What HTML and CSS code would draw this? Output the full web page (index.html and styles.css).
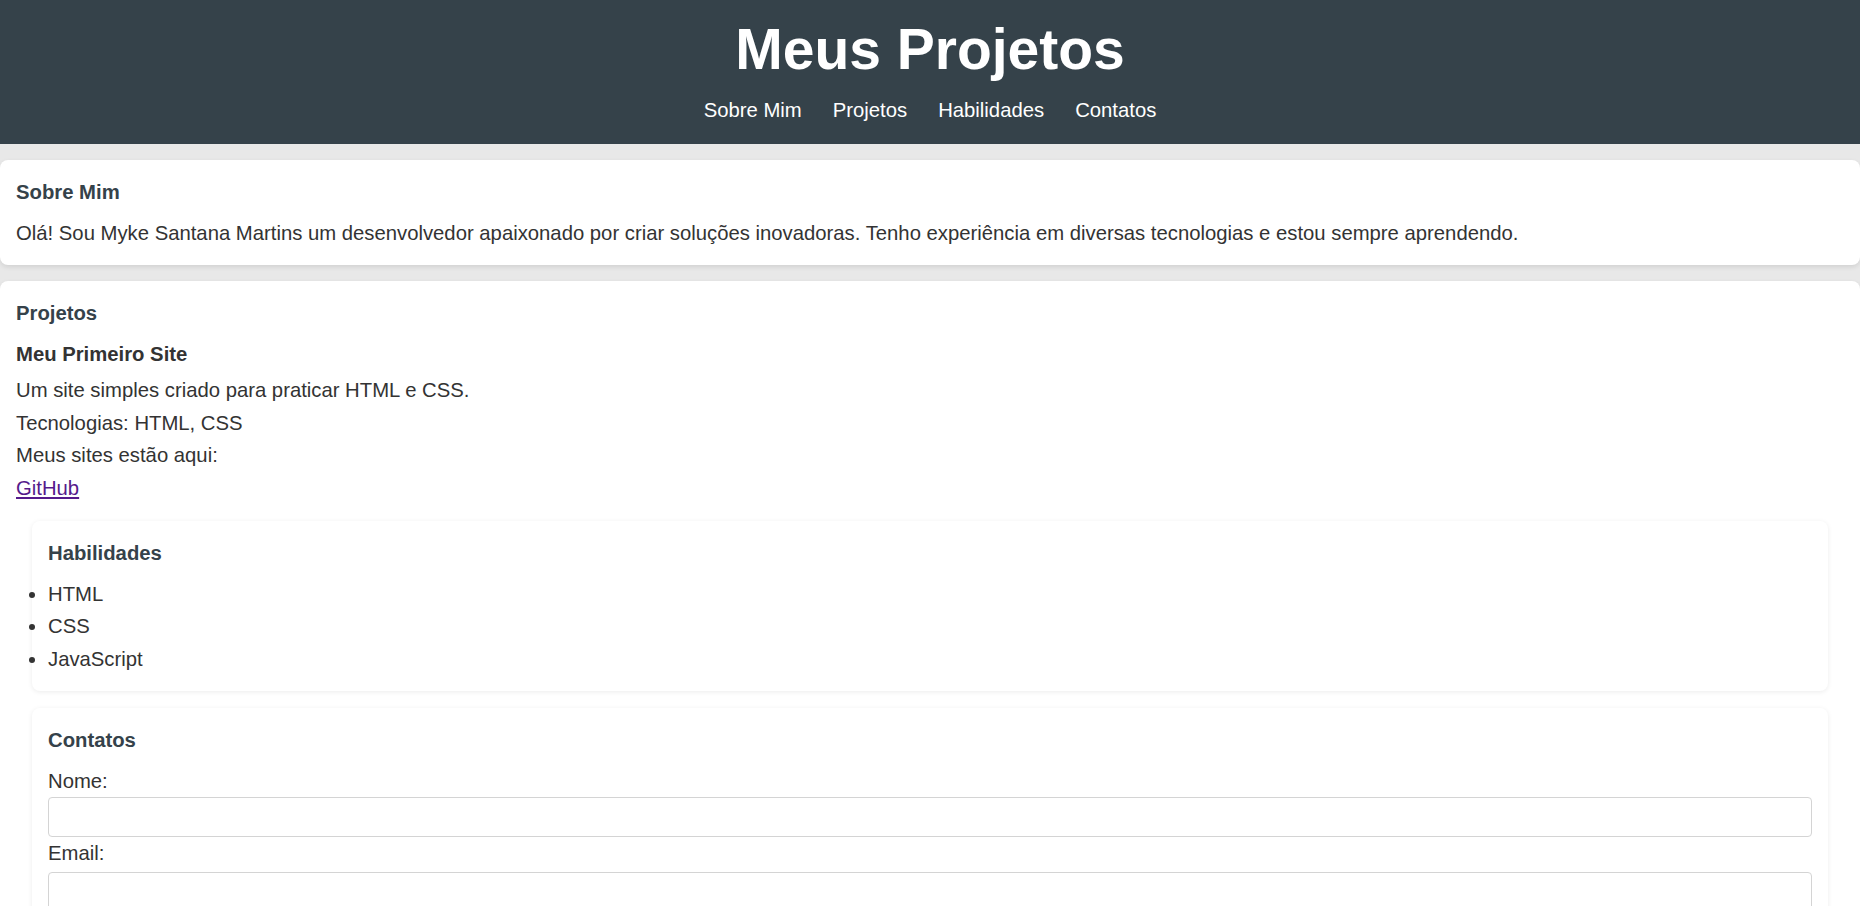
FILE: index.html
```html
<!DOCTYPE html>
<html lang="pt-BR">
<head>
<meta charset="utf-8">
<title>Meus Projetos</title>
<link rel="stylesheet" href="styles.css">
</head>
<body>
<header class="site-header">
  <h1 class="site-title">Meus Projetos</h1>
  <nav class="site-nav">
    <a class="nav-link" href="#sobre">Sobre Mim</a>
    <a class="nav-link" href="#projetos">Projetos</a>
    <a class="nav-link" href="#habilidades">Habilidades</a>
    <a class="nav-link" href="#contatos">Contatos</a>
  </nav>
</header>
<main class="content">
  <section class="card" id="sobre">
    <h2 class="card-title">Sobre Mim</h2>
    <p class="text">Olá! Sou Myke Santana Martins um desenvolvedor apaixonado por criar soluções inovadoras. Tenho experiência em diversas tecnologias e estou sempre aprendendo.</p>
  </section>
  <section class="card" id="projetos">
    <h2 class="card-title">Projetos</h2>
    <div class="project">
      <h3 class="project-title">Meu Primeiro Site</h3>
      <p class="text">Um site simples criado para praticar HTML e CSS.</p>
      <p class="text">Tecnologias: HTML, CSS</p>
      <p class="text">Meus sites estão aqui:<br><a class="link" href="#github">GitHub</a></p>
    </div>
    <section class="card card-nested" id="habilidades">
      <h2 class="card-title">Habilidades</h2>
      <ul class="skills">
        <li>HTML</li>
        <li>CSS</li>
        <li>JavaScript</li>
      </ul>
    </section>
    <section class="card card-nested" id="contatos">
      <h2 class="card-title">Contatos</h2>
      <form class="form">
        <label class="label" for="nome">Nome:</label>
        <input class="field" type="text" id="nome">
        <label class="label" for="email">Email:</label>
        <input class="field field-second" type="email" id="email">
        <label class="label" for="mensagem">Mensagem:</label>
        <textarea class="field field-area" id="mensagem"></textarea>
        <button class="button" type="submit">Enviar</button>
      </form>
    </section>
  </section>
</main>
</body>
</html>
```
FILE: styles.css
```css
* {
  box-sizing: border-box;
}

html, body {
  margin: 0;
  padding: 0;
}

body {
  font-family: "Liberation Sans", Arial, sans-serif;
  font-size: 20.3px;
  line-height: 32.5px;
  color: #333333;
  background: #e8e8e8;
}

.site-header {
  background: #35424a;
  color: #ffffff;
  text-align: center;
  padding: 16px 0 17.5px;
}

.site-title {
  margin: 0 0 12px;
  font-size: 57px;
  line-height: 66px;
  font-weight: bold;
}

.site-nav {
  display: flex;
  justify-content: center;
  gap: 31px;
}

.nav-link {
  color: #ffffff;
  text-decoration: none;
}

.content {
  padding: 16px 0 0;
}

.card {
  background: #ffffff;
  border-radius: 8px;
  padding: 16px;
  margin: 0 0 16px;
  box-shadow: 0 2px 5px rgba(0, 0, 0, 0.1);
}

.card-nested {
  margin: 17px 16px;
  box-shadow: 0 1px 5px rgba(0, 0, 0, 0.08);
}

.card-title {
  margin: 0 0 8px;
  font-size: 20.3px;
  color: #35424a;
}

.project-title {
  margin: 0 0 4px;
  font-size: 20.3px;
  color: #333333;
}

.text {
  margin: 0;
}

.link {
  color: #551a8b;
  text-decoration: underline;
}

.skills {
  margin: 0;
  padding: 0;
  list-style: disc outside;
}

.form {
  display: block;
}

.label {
  display: block;
}

.field {
  display: block;
  width: 100%;
  height: 40px;
  border: 1px solid #d4d4d4;
  border-radius: 4px;
  padding: 8px;
  font-family: inherit;
  font-size: 18px;
  background: #ffffff;
  margin: 0;
}

.field-second {
  margin-top: 2px;
}

.field-area {
  height: 100px;
}

.button {
  margin-top: 10px;
  padding: 8px 16px;
  font-family: inherit;
  font-size: 18px;
  background: #35424a;
  color: #ffffff;
  border: none;
  border-radius: 4px;
}
```
